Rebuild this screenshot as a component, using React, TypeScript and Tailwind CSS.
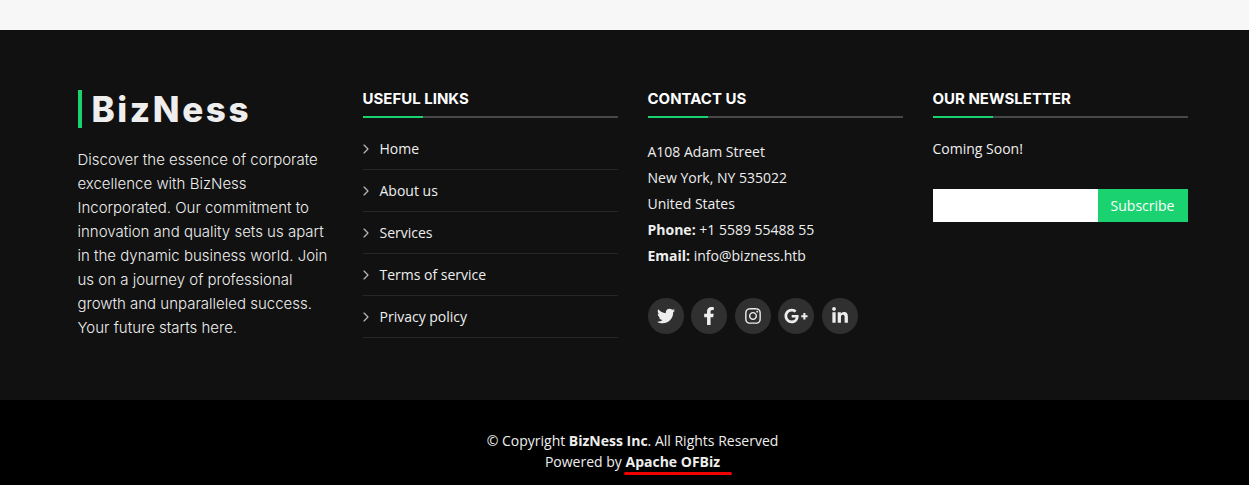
import { FaFacebookF, FaGooglePlusG, FaInstagram, FaLinkedinIn, FaTwitter } from "react-icons/fa";
import { IoIosArrowForward } from "react-icons/io";

const links = ["Home", "About us", "Services", "Terms of service", "Privacy policy"];

function Heading({ title }: { title: string }) {
  return (
    <div>
      <h4 className="h-[26px] font-['Inter'] text-[15px] leading-[17px] font-bold text-white">{title}</h4>
      <div className="h-0.5 bg-[#484848]">
        <div className="h-0.5 w-[60px] bg-[#1bd271]" />
      </div>
    </div>
  );
}

export default function App() {
  return (
    <div className="h-[485px] overflow-hidden bg-[#f7f7f7] pt-[30px] font-['Open_Sans',sans-serif] text-sm text-[#eeeeee]">
      <footer className="h-[370px] bg-[#111111] pt-[60px] pl-[77.5px]">
        <div className="grid w-[1110px] grid-cols-4 gap-[30px]">
          <div>
            <h3 className="h-[38px] border-l-4 border-[#1bd271] pl-2.5 font-['Inter'] text-[35px] leading-[38px] font-extrabold tracking-[2.6px] text-[#eeeeee]">
              BizNess
            </h3>
            <p className="mt-5 font-['Inter'] text-[15px] leading-6 font-light">
              Discover the essence of corporate excellence with BizNess Incorporated. Our commitment to innovation and quality sets us apart in the dynamic business world. Join us on a journey of professional growth and unparalleled success. Your future starts here.
            </p>
          </div>

          <div>
            <Heading title="USEFUL LINKS" />
            <ul className="mt-2.5">
              {links.map((l) => (
                <li key={l} className="flex h-[42px] items-center border-b border-[#262626]">
                  <IoIosArrowForward className="-ml-1 h-[14px] w-[14px] text-[#b4b4b4]" />
                  <span className="ml-[7px]">{l}</span>
                </li>
              ))}
            </ul>
          </div>

          <div>
            <Heading title="CONTACT US" />
            <div className="mt-[21px] leading-[26px]">
              <div>A108 Adam Street</div>
              <div>New York, NY 535022</div>
              <div>United States</div>
              <div>
                <strong>Phone:</strong> +1 5589 55488 55
              </div>
              <div>
                <strong>Email:</strong> info@bizness.htb
              </div>
            </div>
            <div className="mt-[29px] flex gap-[7.5px]">
              <a className="flex h-9 w-9 items-center justify-center rounded-full bg-[#303030] text-lg text-[#eeeeee]"><FaTwitter /></a>
              <a className="flex h-9 w-9 items-center justify-center rounded-full bg-[#303030] text-lg text-[#eeeeee]"><FaFacebookF /></a>
              <a className="flex h-9 w-9 items-center justify-center rounded-full bg-[#303030] text-lg text-[#eeeeee]"><FaInstagram /></a>
              <a className="flex h-9 w-9 items-center justify-center rounded-full bg-[#303030] text-lg text-[#eeeeee]"><FaGooglePlusG className="text-2xl" /></a>
              <a className="flex h-9 w-9 items-center justify-center rounded-full bg-[#303030] text-lg text-[#eeeeee]"><FaLinkedinIn /></a>
            </div>
          </div>

          <div>
            <Heading title="OUR NEWSLETTER" />
            <p className="mt-5 leading-[21px]">Coming Soon!</p>
            <form className="mt-[30px] flex h-[33px]">
              <input type="text" className="w-[165px] bg-white" />
              <button type="button" className="w-[90px] bg-[#1bd271] text-white">Subscribe</button>
            </form>
          </div>
        </div>
      </footer>

      <div className="h-[85px] bg-black pt-[30px] text-center leading-[21px]">
        <div className="ml-4">
          &copy; Copyright <strong>BizNess Inc</strong>. All Rights Reserved
        </div>
        <div className="ml-4">
          Powered by{" "}
          <span className="relative font-bold">
            Apache OFBiz
            <span className="absolute top-5 -right-[12px] -left-px h-[3px] rounded-full bg-[#f00000]" />
          </span>
        </div>
      </div>
    </div>
  );
}
